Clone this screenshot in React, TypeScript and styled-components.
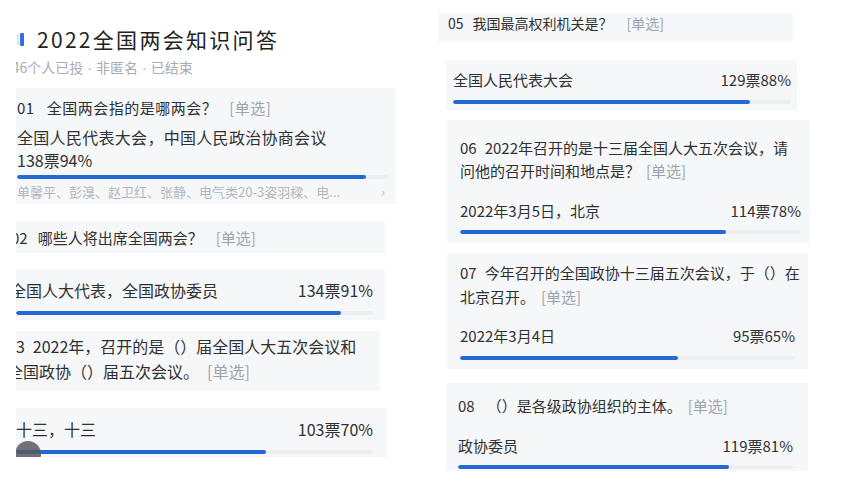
import React from 'react';
import styled, { createGlobalStyle } from 'styled-components';

const GlobalStyle = createGlobalStyle`
  html, body { margin: 0; padding: 0; background: #ffffff; }
  body {
    font-family: "Noto Sans CJK SC", "Noto Sans", "Liberation Sans", sans-serif;
    color: #333333;
    width: 848px;
    height: 495px;
    overflow: hidden;
  }
`;

const Page = styled.div`
  display: flex;
  align-items: flex-start;
  width: 848px;
  height: 495px;
  overflow: hidden;
`;

const LeftColumn = styled.section`
  width: 380px;
  margin-left: 16px;
  padding-top: 28px;
  overflow: hidden;
  display: flex;
  flex-direction: column;
  align-items: flex-start;
  font-size: 16px;
`;

const RightColumn = styled.section`
  width: 380px;
  margin-left: 42px;
  padding-top: 13px;
  display: flex;
  flex-direction: column;
  align-items: flex-start;
  font-size: 15px;
`;

const TitleRow = styled.div`
  display: flex;
  align-items: center;
  height: 22px;
`;

const TitleMark = styled.span`
  display: block;
  width: 4px;
  height: 13px;
  margin-left: 4px;
  margin-right: 13px;
  background: #2f6fe0;
  border-radius: 1px;
  box-shadow: -4px 0 0 -1px #d9e3f3;
`;

const Title = styled.h1`
  margin: 0;
  font-size: 21px;
  font-weight: 400;
  letter-spacing: 2.3px;
  line-height: 22px;
  color: #222222;
  white-space: nowrap;
`;

const Meta = styled.div`
  margin-top: 9px;
  margin-left: -12px;
  font-size: 14px;
  line-height: 16px;
  color: #a7abb2;
  white-space: nowrap;
`;

const Sep = styled.span`
  margin: 0 4px;
  font-family: "Liberation Sans", sans-serif;
`;

const Card = styled.div<{ $w: number; $ml?: number; $mt: number; $pad: string }>`
  position: relative;
  box-sizing: border-box;
  width: ${(p) => p.$w}px;
  margin-left: ${(p) => p.$ml ?? 0}px;
  margin-top: ${(p) => p.$mt}px;
  padding: ${(p) => p.$pad};
  background: #f6f7f9;
  overflow: hidden;
`;

const Question = styled.div<{ $size: number; $lh: number; $shift?: number; $spacing?: number }>`
  margin-left: ${(p) => p.$shift ?? 0}px;
  font-size: ${(p) => p.$size}px;
  line-height: ${(p) => p.$lh}px;
  letter-spacing: ${(p) => p.$spacing ?? 0}px;
  color: #303133;
  white-space: nowrap;
`;

const Num = styled.span<{ $gap: number }>`
  margin-right: ${(p) => p.$gap}px;
`;

const Tag = styled.span<{ $gap: number }>`
  margin-left: ${(p) => p.$gap}px;
  color: #9ea4ad;
`;

const OptionRow = styled.div<{ $mt: number; $size?: number }>`
  display: flex;
  justify-content: space-between;
  align-items: center;
  margin-top: ${(p) => p.$mt}px;
  font-size: ${(p) => p.$size ?? 15}px;
  line-height: 20px;
  color: #303133;
  white-space: nowrap;
`;

const OptionLabel = styled.span<{ $shift?: number; $spacing?: number }>`
  margin-left: ${(p) => p.$shift ?? 0}px;
  letter-spacing: ${(p) => p.$spacing ?? 0}px;
`;

const Votes = styled.span``;

const Track = styled.div<{ $mt: number }>`
  margin-top: ${(p) => p.$mt}px;
  height: 4px;
  border-radius: 2px;
  background: #eceef2;
  overflow: hidden;
`;

const Fill = styled.div`
  height: 100%;
  border-radius: 2px;
  background: #2468d6;
`;

const Voters = styled.div`
  display: flex;
  justify-content: space-between;
  align-items: center;
  margin-top: 5px;
  font-size: 13px;
  line-height: 16px;
  color: #b3b7bd;
  white-space: nowrap;
`;

const Chevron = styled.span`
  margin-right: 3px;
  font-size: 13px;
  color: #c4c8cd;
`;

const FloatingDot = styled.span`
  position: absolute;
  left: -1px;
  top: 33px;
  width: 26px;
  height: 26px;
  border-radius: 50%;
  background: rgba(86, 91, 98, 0.85);
`;

const Bar: React.FC<{ mt: number; pct: number }> = ({ mt, pct }) => (
  <Track $mt={mt}>
    <Fill style={{ width: `${pct}%` }} />
  </Track>
);

export default function App() {
  return (
    <>
      <GlobalStyle />
      <Page>
        <LeftColumn>
          <TitleRow>
            <TitleMark />
            <Title>2022全国两会知识问答</Title>
          </TitleRow>
          <Meta>
            146个人已投<Sep>·</Sep>非匿名<Sep>·</Sep>已结束
          </Meta>

          <Card $w={380} $mt={12} $pad="10px 8px 4px 1px">
            <Question $size={15} $lh={20} $spacing={0.5}>
              <Num $gap={12}>01</Num>全国两会指的是哪两会？<Tag $gap={12}>[单选]</Tag>
            </Question>
            <OptionRow $mt={9} $size={16}>
              <OptionLabel $spacing={0.3}>全国人民代表大会，中国人民政治协商会议</OptionLabel>
            </OptionRow>
            <OptionRow $mt={3} $size={16}>
              <Votes>138票94%</Votes>
            </OptionRow>
            <Bar mt={5} pct={94} />
            <Voters>
              <span>单馨平、彭溴、赵卫红、张静、电气类20-3姿羽樑、电...</span>
              <Chevron>›</Chevron>
            </Voters>
          </Card>

          <Card $w={369} $mt={17} $pad="7px 0 5px 0">
            <Question $size={15} $lh={20} $shift={-5}>
              <Num $gap={10}>02</Num>哪些人将出席全国两会？<Tag $gap={13}>[单选]</Tag>
            </Question>
          </Card>

          <Card $w={369} $mt={16} $pad="11px 12px 5px 0">
            <OptionRow $mt={0} $size={16}>
              <OptionLabel $shift={-6}>全国人大代表，全国政协委员</OptionLabel>
              <Votes>134票91%</Votes>
            </OptionRow>
            <Bar mt={11} pct={91} />
          </Card>

          <Card $w={364} $mt={11} $pad="3px 0 7px 0">
            <Question $size={16} $lh={25} $shift={-9}>
              <Num $gap={8}>03</Num>2022年，召开的是（）届全国人大五次会议和
              <br />
              全国政协（）届五次会议。<Tag $gap={8}>[单选]</Tag>
            </Question>
          </Card>

          <Card $w={371} $mt={17} $pad="11px 14px 3px 0">
            <OptionRow $mt={0} $size={16}>
              <OptionLabel>十三，十三</OptionLabel>
              <Votes>103票70%</Votes>
            </OptionRow>
            <Bar mt={11} pct={70} />
            <FloatingDot />
          </Card>
        </LeftColumn>

        <RightColumn>
          <Card $w={355} $mt={0} $pad="0 10px 9px 10px">
            <Question $size={14} $lh={20}>
              <Num $gap={9}>05</Num>我国最高权利机关是？<Tag $gap={14}>[单选]</Tag>
            </Question>
          </Card>

          <Card $w={351} $ml={8} $mt={18} $pad="10px 6px 6px 7px">
            <OptionRow $mt={0}>
              <OptionLabel>全国人民代表大会</OptionLabel>
              <Votes>129票88%</Votes>
            </OptionRow>
            <Bar mt={10} pct={88} />
          </Card>

          <Card $w={363} $ml={9} $mt={10} $pad="16px 9px 9px 13px">
            <Question $size={15} $lh={23}>
              <Num $gap={8}>06</Num>2022年召开的是十三届全国人大五次会议，请
              <br />
              问他的召开时间和地点是？<Tag $gap={6}>[单选]</Tag>
            </Question>
            <OptionRow $mt={19}>
              <OptionLabel>2022年3月5日，北京</OptionLabel>
              <Votes>114票78%</Votes>
            </OptionRow>
            <Bar mt={9} pct={78} />
          </Card>

          <Card $w={361} $ml={9} $mt={10} $pad="8px 13px 9px 13px">
            <Question $size={15} $lh={24}>
              <Num $gap={8}>07</Num>今年召开的全国政协十三届五次会议，于（）在
              <br />
              北京召开。<Tag $gap={6}>[单选]</Tag>
            </Question>
            <OptionRow $mt={17}>
              <OptionLabel>2022年3月4日</OptionLabel>
              <Votes>95票65%</Votes>
            </OptionRow>
            <Bar mt={10} pct={65} />
          </Card>

          <Card $w={362} $ml={8} $mt={14} $pad="11px 15px 2px 12px">
            <Question $size={15} $lh={24}>
              <Num $gap={12}>08</Num>（）是各级政协组织的主体。<Tag $gap={6}>[单选]</Tag>
            </Question>
            <OptionRow $mt={18}>
              <OptionLabel>政协委员</OptionLabel>
              <Votes>119票81%</Votes>
            </OptionRow>
            <Bar mt={9} pct={81} />
          </Card>
        </RightColumn>
      </Page>
    </>
  );
}
